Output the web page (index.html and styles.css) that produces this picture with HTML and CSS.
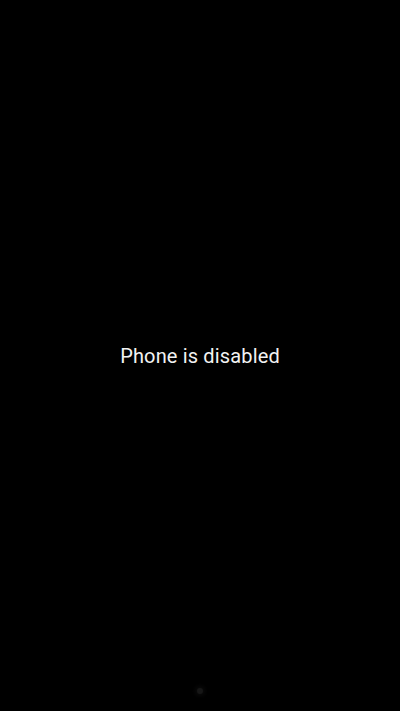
FILE: index.html
```html
<!DOCTYPE html>
<html>
<head>
<meta charset="utf-8">
<link rel="stylesheet" href="styles.css">
</head>
<body>
<div class="screen">
  <div class="message">Phone is disabled</div>
  <div class="dot"></div>
</div>
</body>
</html>
```
FILE: styles.css
```css
html, body {
  margin: 0;
  padding: 0;
  background: #000;
}
.screen {
  width: 400px;
  height: 711px;
  position: relative;
  display: flex;
  align-items: center;
  justify-content: center;
  background: #000;
}
.message {
  font-family: Roboto, "Noto Sans", sans-serif;
  font-size: 20px;
  color: #f2f2f2;
  letter-spacing: 0.15px;
}
.dot {
  position: absolute;
  left: 197px;
  top: 688px;
  width: 6px;
  height: 6px;
  border-radius: 50%;
  background: #161616;
  box-shadow: 0 0 4px 2px #0b0b0b;
}
```
